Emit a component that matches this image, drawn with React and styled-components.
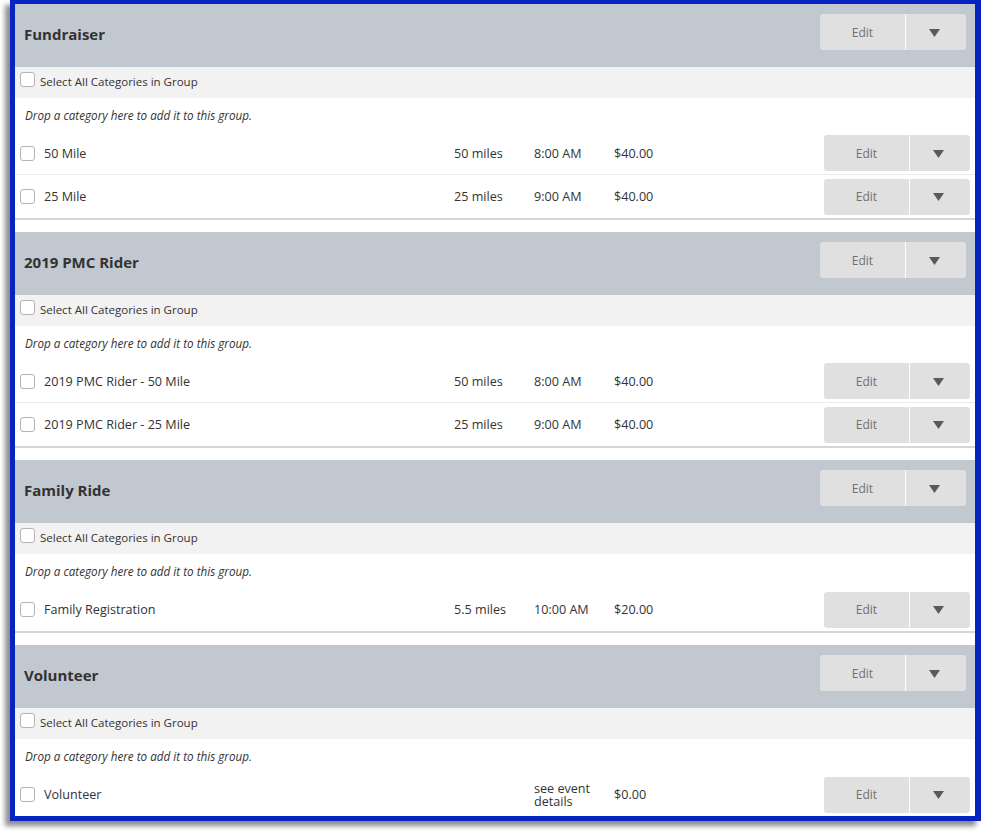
import React from "react";
import styled, { createGlobalStyle } from "styled-components";

const GlobalStyle = createGlobalStyle`
  body {
    margin: 0;
    background: #fff;
    font-family: "Open Sans", "Noto Sans", sans-serif;
    color: #333;
  }
`;

const groups = [
  {
    title: "Fundraiser",
    rows: [
      { name: "50 Mile", distance: "50 miles", time: "8:00 AM", price: "$40.00" },
      { name: "25 Mile", distance: "25 miles", time: "9:00 AM", price: "$40.00" },
    ],
  },
  {
    title: "2019 PMC Rider",
    rows: [
      { name: "2019 PMC Rider - 50 Mile", distance: "50 miles", time: "8:00 AM", price: "$40.00" },
      { name: "2019 PMC Rider - 25 Mile", distance: "25 miles", time: "9:00 AM", price: "$40.00" },
    ],
  },
  {
    title: "Family Ride",
    rows: [
      { name: "Family Registration", distance: "5.5 miles", time: "10:00 AM", price: "$20.00" },
    ],
  },
  {
    title: "Volunteer",
    rows: [{ name: "Volunteer", distance: "", time: "see event details", price: "$0.00" }],
  },
];

export default function App() {
  return (
    <>
      <GlobalStyle />
      <Page>
        <Frame>
          {groups.map((g) => (
            <Group key={g.title}>
              <GroupHeader>
                <GroupTitle>{g.title}</GroupTitle>
                <SplitButton />
              </GroupHeader>
              <SelectRow>
                <Checkbox $offset />
                <span>Select All Categories in Group</span>
              </SelectRow>
              <DropZone>Drop a category here to add it to this group.</DropZone>
              {g.rows.map((r) => (
                <CategoryRow key={r.name}>
                  <Checkbox />
                  <Label>{r.name}</Label>
                  <Cell>{r.distance}</Cell>
                  <Cell $wrap>{r.time}</Cell>
                  <Cell>{r.price}</Cell>
                  <SplitButton />
                </CategoryRow>
              ))}
            </Group>
          ))}
        </Frame>
      </Page>
    </>
  );
}

function SplitButton() {
  return (
    <ButtonGroup>
      <EditButton>Edit</EditButton>
      <ArrowButton>
        <svg width="11" height="8" viewBox="0 0 11 8">
          <path d="M0 0 H11 L5.5 8 Z" fill="#5a5a5a" />
        </svg>
      </ArrowButton>
    </ButtonGroup>
  );
}

const Page = styled.div`
  padding: 0 0 11px 10px;
`;
const Frame = styled.div`
  border: 5px solid #0624c2;
  border-top-width: 4px;
  border-right-width: 6px;
  box-shadow: -5px 5px 5px rgba(0, 0, 0, 0.45);
  background: #fff;
`;
const Group = styled.div`
  margin-bottom: 12px;
  &:last-child {
    margin-bottom: 0;
  }
  &:last-child > div:last-child {
    border-bottom: none;
    height: 43px;
  }
`;
const GroupHeader = styled.div`
  height: 63px;
  box-sizing: border-box;
  padding: 10px 9px 0;
  background: #c1c8cf;
  display: flex;
  align-items: flex-start;
  justify-content: space-between;
`;
const GroupTitle = styled.div`
  font-size: 15px;
  font-weight: 700;
  color: #333;
  line-height: 36px;
  padding-top: 2px;
`;
const ButtonGroup = styled.div`
  display: flex;
  height: 36px;
  width: 146px;
  border-radius: 3px;
  overflow: hidden;
`;
const EditButton = styled.div`
  width: 85px;
  background: #e0e0e0;
  border-right: 1px solid #fff;
  display: flex;
  align-items: center;
  justify-content: center;
  font-size: 12px;
  color: #707070;
`;
const ArrowButton = styled.div`
  flex: 1;
  background: #e0e0e0;
  display: flex;
  align-items: center;
  justify-content: center;
  padding-top: 1px;
  padding-right: 3px;
`;
const SelectRow = styled.div`
  height: 31px;
  box-sizing: border-box;
  background: #f2f2f2;
  padding-left: 5px;
  padding-bottom: 2px;
  display: flex;
  align-items: center;
  gap: 5px;
  font-size: 11.5px;
  color: #333;
`;
const Checkbox = styled.span`
  width: 15px;
  height: 15px;
  box-sizing: border-box;
  border: 1px solid #b4b4b4;
  border-radius: 3px;
  background: #fff;
  margin-bottom: ${(p) => (p.$offset ? "4px" : "0")};
`;
const DropZone = styled.div`
  height: 34px;
  display: flex;
  align-items: center;
  padding-left: 10px;
  font-size: 11.7px;
  font-style: italic;
  color: #333;
`;
const CategoryRow = styled.div`
  height: 42px;
  box-sizing: content-box;
  padding: 0 5px;
  display: grid;
  grid-template-columns: 24px 410px 80px 80px 1fr 146px;
  align-items: center;
  border-bottom: 1px solid #ebebeb;
  font-size: 12.6px;
  color: #333;
  line-height: 13px;
  &:last-child {
    height: 43px;
    border-bottom: 2px solid #d6d6d6;
  }
`;
const Label = styled.div``;
const Cell = styled.div`
  padding-right: ${(p) => (p.$wrap ? "10px" : "0")};
`;
